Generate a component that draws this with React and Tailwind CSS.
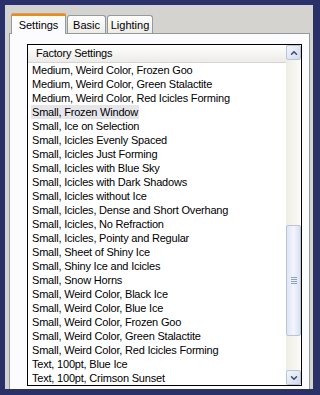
import { ChevronUp, ChevronDown } from 'lucide-react';

const rows = [
  'Medium, Weird Color, Frozen Goo',
  'Medium, Weird Color, Green Stalactite',
  'Medium, Weird Color, Red Icicles Forming',
  'Small, Frozen Window',
  'Small, Ice on Selection',
  'Small, Icicles Evenly Spaced',
  'Small, Icicles Just Forming',
  'Small, Icicles with Blue Sky',
  'Small, Icicles with Dark Shadows',
  'Small, Icicles without Ice',
  'Small, Icicles, Dense and Short Overhang',
  'Small, Icicles, No Refraction',
  'Small, Icicles, Pointy and Regular',
  'Small, Sheet of Shiny Ice',
  'Small, Shiny Ice and Icicles',
  'Small, Snow Horns',
  'Small, Weird Color, Black Ice',
  'Small, Weird Color, Blue Ice',
  'Small, Weird Color, Frozen Goo',
  'Small, Weird Color, Green Stalactite',
  'Small, Weird Color, Red Icicles Forming',
  'Text, 100pt, Blue Ice',
  'Text, 100pt, Crimson Sunset',
];

const SELECTED = 3;

function Tab({ label, active, width }) {
  if (active) {
    return (
      <div className="relative z-10 -mb-px flex h-[21px] w-[55px] items-start justify-center rounded-t-[3px] border border-b-0 border-[#919b9c] bg-[#fcfcfe] pt-[3px]">
        <div className="absolute -left-px -right-px -top-px h-[3px] rounded-t-[3px] bg-[#e68b2c] border-t border-[#e0a040]" />
        <span>{label}</span>
      </div>
    );
  }
  return (
    <div className={`mt-[2px] flex h-[18px] items-start justify-center rounded-t-[3px] border border-b-0 border-[#919b9c] bg-gradient-to-b from-white to-[#ecebe6] pt-[1px] ${width}`}>
      {label}
    </div>
  );
}

function ScrollButton({ children }) {
  return (
    <div className="flex h-[15px] w-[15px] items-center justify-center rounded-[2px] border border-[#b9c4d9] bg-gradient-to-br from-[#f3f6fd] to-[#d2d9ea] text-[#3d4a66]">
      {children}
    </div>
  );
}

export default function App() {
  return (
    <div
      className="h-[395px] w-[320px] overflow-hidden bg-[#2a3169] pl-[5px] pt-[5px] text-[11px] text-black"
      style={{ fontFamily: '"Liberation Sans", Arial, sans-serif' }}
    >
      <div className="h-[384px] w-[308px] overflow-hidden bg-[#d4d3d0] pl-[4px] pt-[8px]">
        {/* tab strip */}
        <div className="flex items-end gap-[1px] pl-[2px]">
          <Tab label="Settings" active />
          <Tab label="Basic" width="w-[39px]" />
          <Tab label="Lighting" width="w-[46px]" />
        </div>

        {/* tab body */}
        <div className="h-[400px] w-[301px] border border-[#919b9c] bg-[#fcfcfe] pl-[17px] pt-[10px]">
          <div className="flex h-[342px] w-[275px] border border-black bg-white">
            <div className="flex min-w-0 flex-1 flex-col">
              <div className="flex h-[18px] shrink-0 items-center border-b border-[#d5d5d5] bg-gradient-to-b from-white to-[#ecebe6] pl-[8px] tracking-[-0.2px]">
                Factory Settings
              </div>
              <div className="flex flex-col pl-[3px] tracking-[-0.2px]">
                {rows.map((r, i) => (
                  <div key={r} className="flex h-[14px] items-center">
                    <span className={`whitespace-nowrap px-[1px] leading-[14px] ${i === SELECTED ? 'bg-[#e6e6ea]' : ''}`}>
                      {r}
                    </span>
                  </div>
                ))}
              </div>
            </div>

            {/* scrollbar */}
            <div className="flex w-[15px] shrink-0 flex-col bg-gradient-to-r from-[#eeede5] to-[#fbfbf8]">
              <ScrollButton>
                <ChevronUp size={10} strokeWidth={3.5} />
              </ScrollButton>
              <div className="h-[165px]" />
              <div className="flex h-[111px] w-[15px] flex-col items-center justify-center gap-[1px] rounded-[2px] border border-[#b9c4d9] bg-gradient-to-r from-[#dfe5f5] via-[#f3f5fc] to-[#dbe1f2]">
                <div className="h-px w-[6px] bg-[#8e9fc6]" />
                <div className="h-px w-[6px] bg-[#8e9fc6]" />
                <div className="h-px w-[6px] bg-[#8e9fc6]" />
                <div className="h-px w-[6px] bg-[#8e9fc6]" />
              </div>
              <div className="flex-1" />
              <ScrollButton>
                <ChevronDown size={10} strokeWidth={3.5} />
              </ScrollButton>
            </div>
          </div>
        </div>
      </div>
    </div>
  );
}
